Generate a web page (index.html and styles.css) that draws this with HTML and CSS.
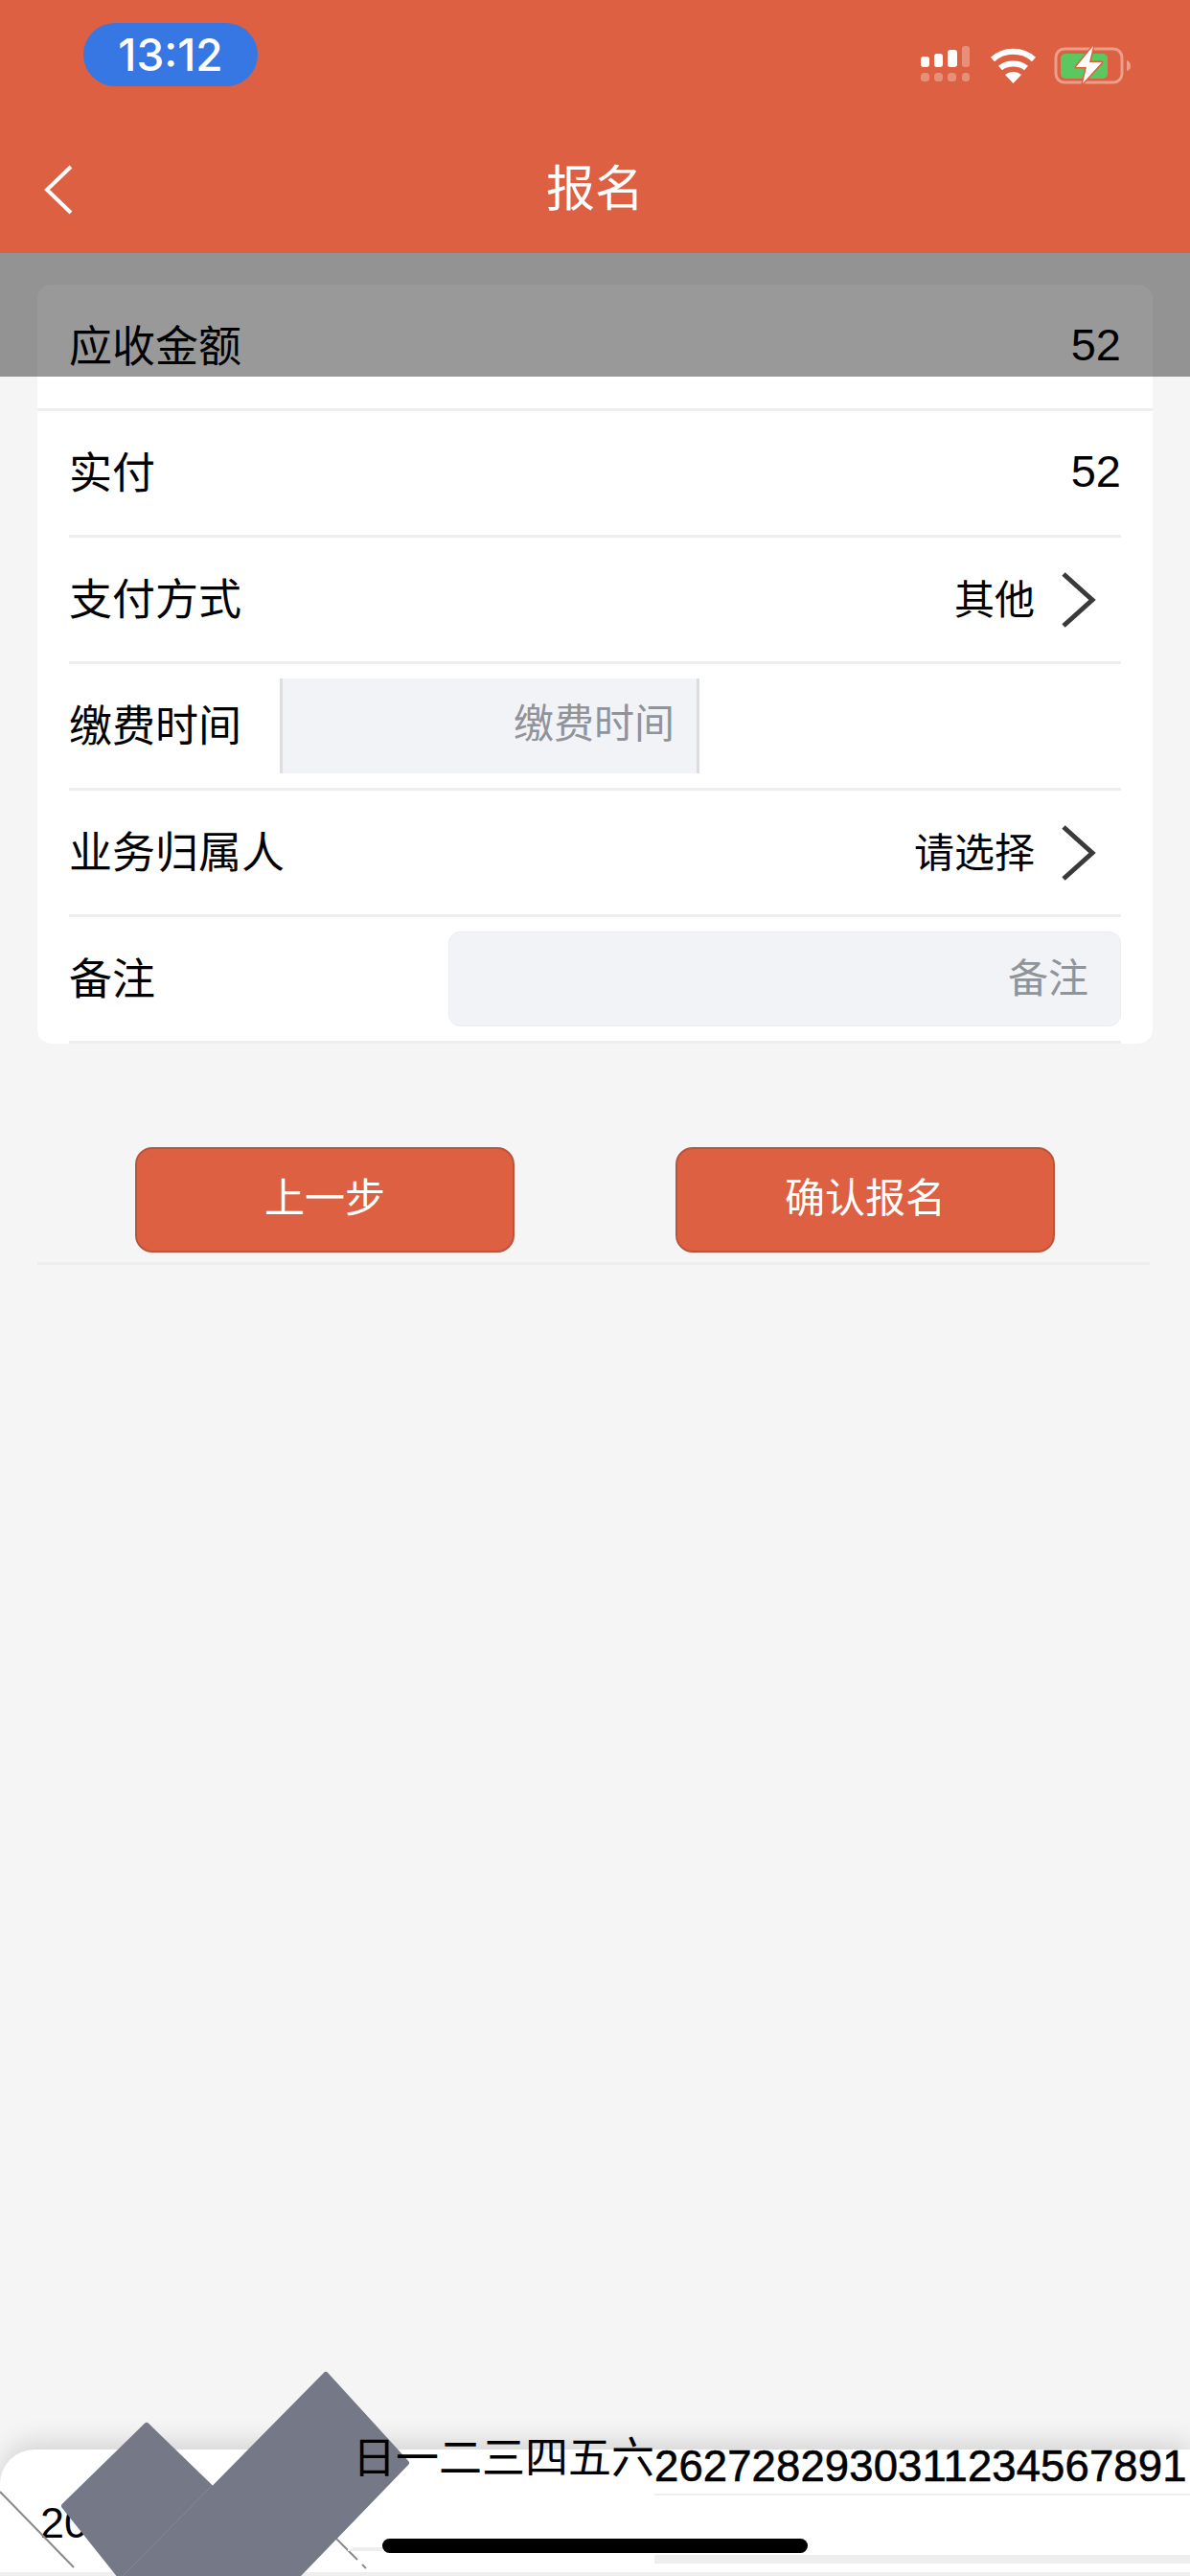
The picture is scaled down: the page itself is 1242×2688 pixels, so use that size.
FILE: index.html
```html
<!DOCTYPE html>
<html>
<head>
  <meta charset="utf-8">
  <title>报名</title>
  <link rel="stylesheet" href="styles.css">
</head>
<body>

  <header class="top">
    <div class="status">
      <div class="time">13:12</div>
      <div class="status-icons">
        <svg class="signal" width="53" height="39" viewBox="0 0 53 39">
          <g fill="#fff">
            <rect x="1" y="12" width="9" height="11" rx="3"/>
            <rect x="15" y="9" width="9" height="14" rx="3"/>
            <rect x="29" y="5" width="10" height="18" rx="3"/>
          </g>
          <g fill="#fff" opacity=".3">
            <rect x="44" y="1" width="8" height="22" rx="3"/>
            <rect x="1" y="29" width="9" height="9" rx="3.5"/>
            <rect x="15" y="29" width="9" height="9" rx="3.5"/>
            <rect x="29" y="29" width="9" height="9" rx="3.5"/>
            <rect x="44" y="29" width="8" height="9" rx="3.5"/>
          </g>
        </svg>
        <svg class="wifi" width="49" height="37" viewBox="0 0 49 37">
          <g fill="none" stroke="#fff" stroke-width="6">
            <path d="M3 12C15 1 34 1 46 12"/>
            <path d="M11 21C18 15 31 15 38 21"/>
          </g>
          <path d="M16 28C21 24 28 24 33 28L24.500 37Z" fill="#fff"/>
        </svg>
        <svg class="battery" width="82" height="42" viewBox="0 0 82 42">
          <rect x="2" y="4" width="69" height="35" rx="9" fill="none" stroke="#fff" stroke-opacity=".4" stroke-width="3"/>
          <rect x="7" y="9" width="49" height="26" rx="5" fill="#5ac85f"/>
          <path d="M76 16C79 17 80 19 80 22C80 25 79 26 76 27Z" fill="#fff" opacity=".4"/>
          <path d="M41 1L23 23H34L30 40L50 18H37Z" fill="#fff" stroke="#dc6041" stroke-width="3" stroke-linejoin="round" paint-order="stroke"/>
        </svg>
      </div>
    </div>
    <nav class="nav">
      <svg class="back" width="32" height="54" viewBox="0 0 32 54">
        <path d="M28 3L3 27L28 51" fill="none" stroke="#fff" stroke-width="4"/>
      </svg>
      <h1>报名</h1>
    </nav>
  </header>

  <div class="mask"></div>

  <main class="content">
    <section class="card">
      <div class="row row-first">
        <span class="label">应收金额</span>
        <span class="amount">52</span>
      </div>
      <div class="row">
        <span class="label">实付</span>
        <span class="amount">52</span>
      </div>
      <div class="row">
        <span class="label">支付方式</span>
        <div class="pick">
          <span class="value">其他</span>
          <svg class="arrow" width="40" height="60" viewBox="0 0 40 60">
            <path d="M6 3L36 30L6 57" fill="none" stroke="#3a3a3a" stroke-width="5"/>
          </svg>
        </div>
      </div>
      <div class="row">
        <span class="label">缴费时间</span>
        <div class="field field-time">缴费时间</div>
      </div>
      <div class="row">
        <span class="label">业务归属人</span>
        <div class="pick">
          <span class="value">请选择</span>
          <svg class="arrow" width="40" height="60" viewBox="0 0 40 60">
            <path d="M6 3L36 30L6 57" fill="none" stroke="#3a3a3a" stroke-width="5"/>
          </svg>
        </div>
      </div>
      <div class="row">
        <span class="label">备注</span>
        <div class="field field-note">备注</div>
      </div>
    </section>

    <div class="actions">
      <button>上一步</button>
      <button>确认报名</button>
    </div>
  </main>

  <footer class="picker">
    <div class="picker-title">20</div>

    <svg class="picker-shapes" width="460" height="214" viewBox="0 2474 460 214">
      <line x1="0" y1="2600" x2="77" y2="2679" stroke="#8a8a8a" stroke-width="2"/>
      <line x1="350" y1="2648" x2="373" y2="2671" stroke="#8a8a8a" stroke-width="2"/>
      <line x1="378" y1="2676" x2="382" y2="2680" stroke="#8a8a8a" stroke-width="2"/>
      <line x1="363" y1="2661" x2="399" y2="2661" stroke="#eee" stroke-width="2"/>
      <g fill="#757886" stroke="#757886" stroke-width="6" stroke-linejoin="round">
        <polygon points="153,2531 219,2595 127,2690 67,2615"/>
        <polygon points="340,2478 424,2570 306,2692 129,2692"/>
      </g>
      <line x1="220" y1="2595" x2="128" y2="2688" stroke="#868995" stroke-width="1"/>
    </svg>

    <div class="picker-week">日一二三四五六</div>
    <div class="picker-days">
      <div class="days-text">2627282930311234567891</div>
      <div class="days-band"></div>
    </div>
    <div class="home-bar"></div>
  </footer>

</body>
</html>
```

FILE: styles.css
```css
* {
  box-sizing: border-box;
}
html, body {
  margin: 0;
  height: 100%;
}
body {
  width: 1242px;
  height: 2688px;
  display: flex;
  flex-direction: column;
  position: relative;
  overflow: hidden;
  background-color: #f5f5f5;
  color: #000;
  font-family: "Liberation Sans", "Noto Sans CJK SC", sans-serif;
  font-size: 45px;
}

/* top bar */
.top {
  height: 264px;
  background-color: #dc6041;
  color: #fff;
}
.status {
  height: 132px;
  padding: 24px 60px 0 87px;
  display: flex;
  justify-content: space-between;
  align-items: flex-start;
}
.time {
  width: 182px;
  height: 66px;
  border-radius: 33px;
  background-color: #3677e3;
  text-align: center;
  font-family: Inter, sans-serif;
  font-size: 46px;
  font-weight: 500;
  line-height: 66px;
}
.status-icons {
  display: flex;
  align-items: flex-start;
  margin-top: 23px;
}
.wifi {
  margin: 3px 0 0 20px;
}
.battery {
  margin: 0 0 0 18px;
}
.nav {
  height: 132px;
  display: grid;
  grid-template-columns: 1fr auto 1fr;
  align-items: center;
}
.back {
  margin-left: 46px;
}
.nav h1 {
  margin: 0;
  font-size: 51px;
  font-weight: normal;
  line-height: 132px;
}

/* dim layer that stopped short */
.mask {
  position: absolute;
  top: 264px;
  left: 0;
  right: 0;
  height: 129px;
  background-color: rgba(0, 0, 0, .4);
}

/* form */
.content {
  flex: 1;
}
.card {
  margin: 33px 39px 0;
  border-radius: 15px;
  background-color: #fff;
}
.row {
  height: 132px;
  margin: 0 33px;
  display: flex;
  justify-content: space-between;
  align-items: center;
  border-bottom: 3px solid #eee;
}
.row-first {
  margin: 0;
  padding: 0 33px;
}
.label {
  padding-bottom: 6px;
}
.amount {
  padding-bottom: 4px;
  font-size: 47px;
}
.pick {
  display: flex;
  align-items: center;
  gap: 24px;
  margin-right: 26px;
}
.value {
  padding-bottom: 6px;
  font-size: 42px;
}
.arrow {
  flex: none;
}
.field {
  height: 99px;
  background-color: #f2f3f6;
  color: #909399;
  text-align: right;
  font-size: 42px;
}
.field-time {
  width: 438px;
  margin: 0 auto 0 40px;
  padding-right: 23px;
  border-left: 3px solid #ddd;
  border-right: 3px solid #ddd;
  line-height: 96px;
}
.field-note {
  width: 702px;
  padding-right: 33px;
  border: 1px solid #ebedf0;
  border-radius: 12px;
  line-height: 98px;
}

.actions {
  margin: 108px 42px 0 39px;
  padding: 0 99px 10px 102px;
  display: flex;
  justify-content: space-between;
  border-bottom: 3px solid #eee;
}
.actions button {
  width: 396px;
  height: 110px;
  padding: 0 0 12px;
  border: 2px solid #b8563d;
  border-radius: 18px;
  background-color: #dc6041;
  color: #fff;
  font-family: "Noto Sans CJK SC", sans-serif;
  font-size: 42px;
}

/* date picker stuck at the bottom */
.picker {
  height: 132px;
  display: flex;
  position: relative;
  border-top-left-radius: 36px;
  border-bottom: 4px solid #eee;
  background-color: #fff;
  box-shadow: 0 -8px 26px rgba(0, 0, 0, .13);
}
.picker-title {
  width: 368px;
  padding: 51px 0 0 42px;
  line-height: 52px;
}
.picker-shapes {
  position: absolute;
  left: 0;
  bottom: -4px;
}
.picker-week {
  width: 315px;
  height: 127px;
  margin-top: -23px;
  position: relative;
  border-bottom: 2px solid #eee;
  white-space: nowrap;
  line-height: 66px;
}
.picker-days {
  flex: 1;
}
.days-text {
  height: 48px;
  white-space: nowrap;
  font-size: 45.5px;
  letter-spacing: .1px;
  line-height: 36px;
  -webkit-text-stroke: .6px #000;
  border-bottom: 2px solid #eee;
}
.days-band {
  height: 9px;
  margin-top: 62px;
  background-color: #eee;
}
.home-bar {
  position: absolute;
  left: 399px;
  top: 93px;
  width: 444px;
  height: 15px;
  border-radius: 8px;
  background-color: #000;
}
```
